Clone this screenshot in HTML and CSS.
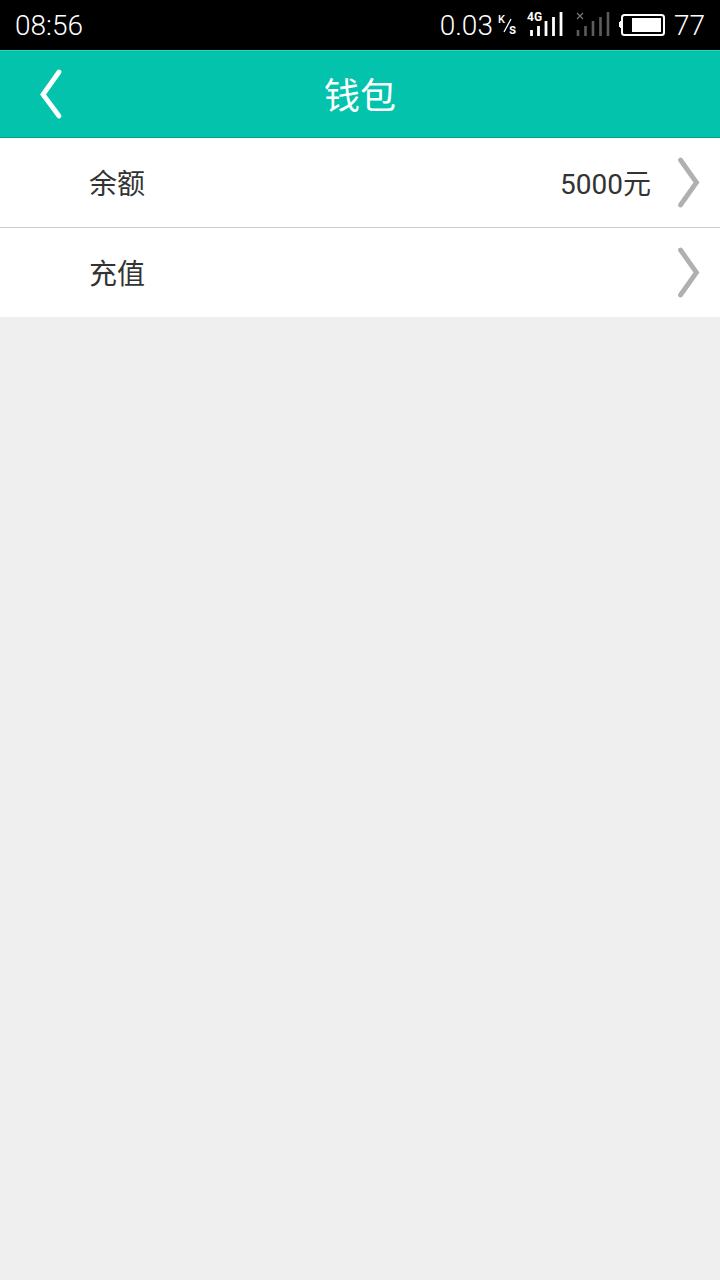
FILE: index.html
```html
<!DOCTYPE html>
<html lang="zh-CN">
<head>
<meta charset="utf-8">
<meta name="viewport" content="width=device-width, initial-scale=1">
<title>钱包</title>
<link rel="stylesheet" href="styles.css">
</head>
<body>
<div class="status">
  <time class="clock">08:56</time>
  <div class="indicators">
    <span class="speed">0.03</span>
    <svg class="unit" width="22" height="28" viewBox="0 0 22 28">
      <text class="unit-text" x="1" y="11">K</text>
      <path d="M14 7 7 20" stroke="#fff" stroke-width="1.3"/>
      <text class="unit-text unit-s" x="12" y="22">s</text>
    </svg>
    <svg class="signal" width="37" height="28" viewBox="0 0 37 28">
      <text class="net-text" x="0" y="9">4G</text>
      <path d="M4.500 18v6M11.500 14v10M19 9v15M26.500 5v19M34 0v24" stroke="#fff" stroke-width="2.800" fill="none"/>
    </svg>
    <svg class="signal-off" width="34" height="28" viewBox="0 0 34 28">
      <path d="M1 1l6 6M7 1l-6 6" stroke="#777" stroke-width="1.200"/>
      <path d="M2 18v6M9.500 14v10M17 9v15M24.500 5v19M32 0v24" stroke="#5c5c5c" stroke-width="2.600" fill="none"/>
    </svg>
    <svg class="battery" width="46" height="24" viewBox="0 0 46 24">
      <rect x="2" y="1" width="42" height="20" rx="2.500" fill="none" stroke="#fff" stroke-width="2"/>
      <path d="M1 7H0v1h-1v5h1v1h1z" fill="#fff"/>
      <rect x="12" y="4" width="29" height="14" fill="#fff"/>
    </svg>
    <span class="level">77</span>
  </div>
</div>
<header class="header">
  <button class="back" type="button" aria-label="返回">
    <svg width="24" height="52" viewBox="0 0 24 52"><path d="M20 4 4 26.500 20 48" fill="none" stroke="#fff" stroke-width="4.800" stroke-linecap="round"/></svg>
  </button>
  <h1 class="title">钱包</h1>
</header>
<main class="list">
  <a class="row" href="#balance">
    <span class="text">
      <span class="label">余额</span>
      <span class="value">5000元</span>
    </span>
    <svg class="chevron" width="24" height="52" viewBox="0 0 24 52"><path d="M4.500 4 20.500 26.500 4.500 49" fill="none" stroke="#b0b0b0" stroke-width="4.800" stroke-linecap="round"/></svg>
  </a>
  <a class="row" href="#recharge">
    <span class="text">
      <span class="label">充值</span>
    </span>
    <svg class="chevron" width="24" height="52" viewBox="0 0 24 52"><path d="M4.500 4 20.500 26.500 4.500 49" fill="none" stroke="#b0b0b0" stroke-width="4.800" stroke-linecap="round"/></svg>
  </a>
</main>
</body>
</html>
```
FILE: styles.css
```css
* {
  box-sizing: border-box;
}

body {
  margin: 0;
  min-height: 100vh;
  background: #efefef;
  color: #333;
  font-family: "Noto Sans CJK SC", sans-serif;
}

svg {
  display: block;
  flex: none;
  overflow: visible;
}

.status {
  display: flex;
  justify-content: space-between;
  align-items: center;
  height: 50px;
  padding: 2px 15px 0;
  background: #000;
  color: #fff;
  font-family: Roboto, sans-serif;
  font-size: 28px;
  font-weight: 300;
  line-height: 32px;
}

.indicators {
  display: flex;
  align-items: center;
}

.unit {
  margin: 0 8px 0 4px;
}

.unit-text {
  fill: #fff;
  font-size: 11px;
  font-weight: 500;
}

.unit-s {
  font-size: 14px;
}

.net-text {
  fill: #fff;
  font-size: 12px;
  font-weight: 700;
}

.signal-off {
  margin: 0 10px 0 12px;
}

.level {
  margin-left: 8px;
}

.header {
  display: grid;
  grid-template-columns: 100px 1fr 100px;
  align-items: center;
  height: 88px;
  background: #04c3ad;
  border-top: 1px solid #20d8c4;
  border-bottom: 1px solid #079d8c;
  color: #fff;
}

.back {
  padding: 0 0 0 39px;
  border: 0;
  background: none;
}

.title {
  margin: 0;
  padding-bottom: 3px;
  font-size: 36px;
  font-weight: 400;
  line-height: 52px;
  text-align: center;
}

.list {
  background: #fff;
}

.row {
  box-sizing: content-box;
  display: flex;
  align-items: center;
  height: 87px;
  padding: 0 20px 2px 89px;
  color: #333;
  font-size: 28px;
  line-height: 40px;
  text-decoration: none;
}

.row:not(:last-child) {
  border-bottom: 1px solid #ccc;
}

.text {
  display: flex;
  flex: 1;
  justify-content: space-between;
  align-items: baseline;
}

.value {
  margin-right: 25px;
  font-family: Roboto, "Noto Sans CJK SC", sans-serif;
  line-height: 32px;
}
```
